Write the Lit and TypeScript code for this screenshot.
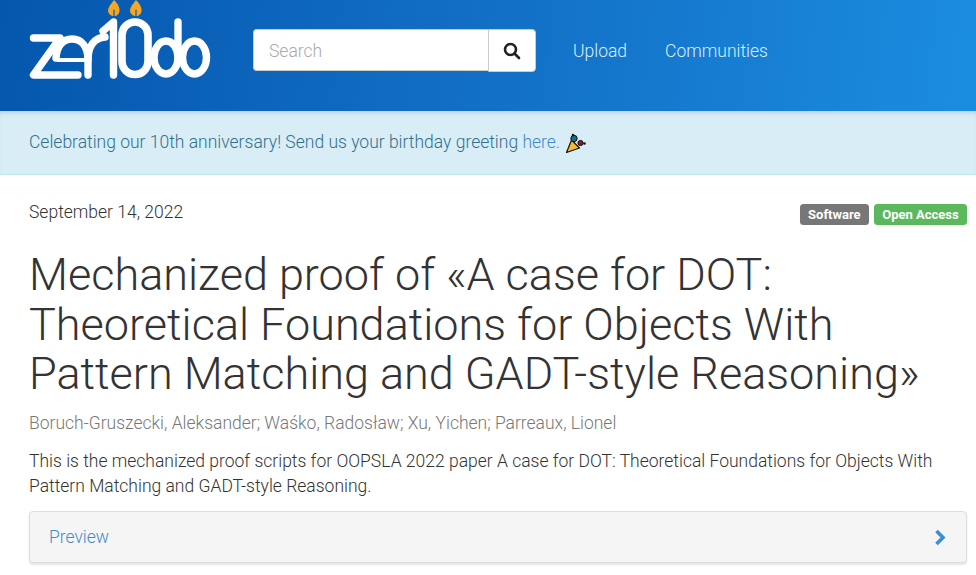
import { LitElement, css, html } from "lit";
import { customElement } from "lit/decorators.js";

@customElement("app-root")
export class AppRoot extends LitElement {
  static override styles = css`
    :host {
      display: block;
      width: 976px;
      height: 575px;
      overflow: hidden;
      background: #fff;
      font-family: Roboto, "Liberation Sans", sans-serif;
      font-weight: 300;
      font-size: 17.5px;
      line-height: 25px;
      color: #333;
    }

    header {
      box-sizing: border-box;
      height: 111px;
      display: flex;
      align-items: flex-start;
      background: linear-gradient(97deg, #0457ad 0%, #0f68bf 35%, #1476cb 62%, #1b8de0 100%);
    }

    .logo {
      display: block;
      margin-left: 28px;
      flex: none;
    }

    .search {
      display: flex;
      margin: 29px 0 0 35px;
      width: 283px;
      height: 43px;
    }

    .search .input {
      box-sizing: border-box;
      flex: 1;
      height: 42px;
      padding: 9px 15px;
      background: #fff;
      border: 1px solid #ccc;
      border-right: none;
      border-radius: 4px 0 0 4px;
      color: #a9a9a9;
    }

    .search .btn {
      box-sizing: border-box;
      width: 48px;
      display: flex;
      align-items: center;
      justify-content: center;
      background: #fff;
      border: 1px solid #ccc;
      border-radius: 0 4px 4px 0;
    }

    nav {
      display: flex;
      gap: 38px;
      margin: 39px 0 0 37px;
      color: #dbeeff;
    }

    .banner {
      box-sizing: border-box;
      height: 64px;
      display: flex;
      align-items: center;
      padding: 0 0 0 29px;
      background: #d9edf7;
      border-bottom: 1px solid #bce8f1;
      box-shadow: inset 0 4px 4px -2px rgba(0, 0, 0, 0.12);
      color: #31708f;
    }

    .banner a {
      color: #428bca;
    }

    .banner svg {
      margin-left: 5px;
    }

    main {
      padding: 0 9px 0 29px;
    }

    .meta {
      display: flex;
      justify-content: space-between;
      padding-top: 25px;
    }

    .labels {
      display: flex;
      gap: 5px;
      margin-top: 4px;
    }

    .label {
      height: 21px;
      padding: 0 8.3px;
      border-radius: 3.5px;
      color: #fff;
      font-size: 13px;
      font-weight: 700;
      line-height: 22px;
    }

    .software {
      background: #777;
    }

    .open {
      background: #5cb85c;
    }

    h1 {
      margin: 25px 0 0;
      font-size: 45px;
      font-weight: 300;
      line-height: 49.5px;
      color: #333;
    }

    .authors {
      margin-top: 12px;
      color: #777;
    }

    .desc {
      margin-top: 13px;
    }

    .panel {
      box-sizing: border-box;
      height: 52px;
      margin-top: 12px;
      display: flex;
      align-items: center;
      justify-content: space-between;
      padding: 2px 20px 0 19px;
      background: #f5f5f5;
      border: 1px solid #ddd;
      border-radius: 4px;
      box-shadow: 0 2px 2px rgba(0, 0, 0, 0.1);
      color: #428bca;
    }
  `;

  private renderLogo() {
    return html`
      <svg class="logo" width="190" height="84" viewBox="28 0 190 84">
        <g fill="none" stroke="#fff" stroke-width="7.4" stroke-linecap="round" stroke-linejoin="round">
          <path d="M33.5 38H60L33.5 75H78" />
          <path d="M56 58C57 46 63 39 72 39C82 39 88 47 88 60V75" />
          <path d="M88 60C88 46 94 38 105 37" />
          <path d="M113.5 75V22L103 31" />
          <rect x="122" y="22" width="26" height="52.5" rx="13" stroke-width="7.6" />
          <ellipse cx="166" cy="57.5" rx="12" ry="16.5" />
          <path d="M178 57V22" />
          <ellipse cx="194.5" cy="57.5" rx="12" ry="16.5" />
          <path d="M57 60H88" stroke-width="4" stroke-linecap="butt" />
        </g>
        <path d="M114 0C119 5 119.5 8 119.5 10.5C119.5 14 117 16 114 16C111 16 108 14 108 10.5C108 8 110 5 114 0Z" fill="#f5a623" />
        <path d="M136 0C141 5 141.5 8 141.5 10.5C141.5 14 139 16 136 16C133 16 130 14 130 10.5C130 8 132 5 136 0Z" fill="#f5a623" />
        <path d="M114 10V16M136 10V16" stroke="#0a5cb2" stroke-width="1.2" stroke-linecap="round" />
      </svg>
    `;
  }

  override render() {
    return html`
      <header>
        ${this.renderLogo()}
        <div class="search">
          <div class="input">Search</div>
          <div class="btn">
            <svg width="18" height="18" viewBox="0 0 18 18" fill="none" stroke="#222" stroke-width="2.6">
              <circle cx="7.5" cy="7.5" r="5.5" />
              <path d="M11.5 11.5L16 16" stroke-linecap="round" />
            </svg>
          </div>
        </div>
        <nav><span>Upload</span><span>Communities</span></nav>
      </header>
      <div class="banner">
        <span>Celebrating our 10th anniversary! Send us your birthday greeting <a>here.</a></span>
        <svg width="22" height="22" viewBox="0 0 22 22">
          <path d="M1.5 20.5L6.5 8L14.5 16Z" fill="#f5b82e" stroke="#111" stroke-width="1.2" stroke-linejoin="round" />
          <circle cx="9" cy="6.5" r="3.2" fill="#1c6a8c" stroke="#111" />
          <circle cx="15.5" cy="11" r="2.6" fill="#8c1c2c" stroke="#111" />
          <circle cx="19.5" cy="11.5" r="1.3" fill="#111" />
          <circle cx="8" cy="3" r="1.2" fill="#111" />
        </svg>
      </div>
      <main>
        <div class="meta">
          <span>September 14, 2022</span>
          <div class="labels">
            <span class="label software">Software</span>
            <span class="label open">Open Access</span>
          </div>
        </div>
        <h1>Mechanized proof of «A case for DOT: Theoretical Foundations for Objects With Pattern Matching and GADT-style Reasoning»</h1>
        <div class="authors">Boruch-Gruszecki, Aleksander; Waśko, Radosław; Xu, Yichen; Parreaux, Lionel</div>
        <div class="desc">This is the mechanized proof scripts for OOPSLA 2022 paper A case for DOT: Theoretical Foundations for Objects With Pattern Matching and GADT-style Reasoning.</div>
        <div class="panel">
          <span>Preview</span>
          <svg width="12" height="17" viewBox="0 0 12 17" fill="none" stroke="#3d8fd4" stroke-width="3.6">
            <path d="M2.5 2L9 8.5L2.5 15" />
          </svg>
        </div>
      </main>
    `;
  }
}
